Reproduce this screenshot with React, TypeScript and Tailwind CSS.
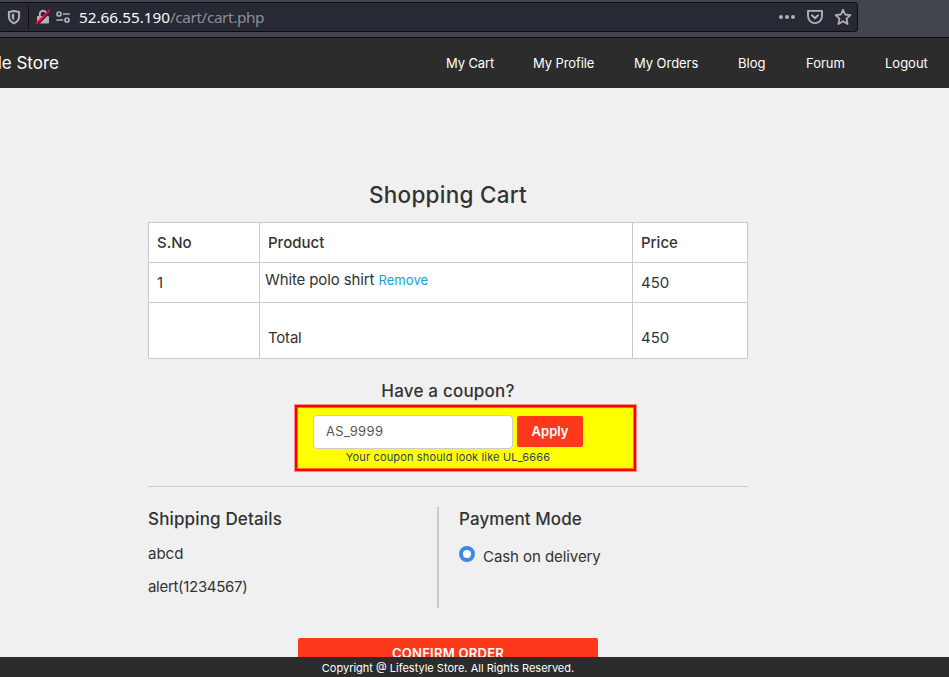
import React from "react";

const navItems = [
  { label: "My Cart", box: "w-[48px] mr-[39px] tracking-[-0.1px]" },
  { label: "My Profile", box: "w-[61px] mr-[40px] tracking-[-0.1px]" },
  { label: "My Orders", box: "w-[64px] mr-[40px] tracking-[-0.05px]" },
  { label: "Blog", box: "w-[28px] mr-[40px]" },
  { label: "Forum", box: "w-[39px] mr-[40px]" },
  { label: "Logout", box: "w-[43px]" },
];

function AddressBar() {
  return (
    <div className="h-[38px] border-b border-[#0c0c0e] bg-[#42454e] pt-[2px]">
      <div className="flex h-[30px] w-[858px] items-center rounded-r-[4px] border border-l-0 border-[#0d0e14] bg-[#272935] font-['Noto_Sans',sans-serif] text-[#b1b1b3]">
        <svg className="ml-[6px] h-4 w-4 shrink-0" viewBox="0 0 16 16" fill="none" stroke="currentColor">
          <path d="M8 1.900 13.100 3v4.500c0 3.400-2 5.500-5.100 6.900-3.100-1.400-5.100-3.500-5.100-6.900V3Z" strokeWidth="2" strokeLinejoin="round" />
          <path d="M8.200 4.600v6.800C6.400 10.400 5.700 9.300 5.700 7.500V5.200Z" fill="currentColor" stroke="none" />
        </svg>
        <div className="ml-[6px] h-[22px] w-px bg-[#0d0e14]" />
        <svg className="ml-[6px] h-4 w-4 shrink-0" viewBox="0 0 16 16" fill="none">
          <path d="M4.800 7V5a3.200 3.200 0 0 1 6.400 0v2" stroke="#b1b1b3" strokeWidth="2" />
          <rect x="2" y="7" width="12" height="7.500" rx="1" fill="#b1b1b3" />
          <path d="M2.500 15.500 15.500 2.500" stroke="#272935" strokeWidth="1.800" />
          <path d="M1.500 14.300 14.500 1.300" stroke="#ff0039" strokeWidth="1.800" strokeLinecap="round" />
        </svg>
        <svg className="ml-[4px] h-4 w-4 shrink-0" viewBox="0 0 16 16" fill="none" stroke="currentColor" strokeWidth="1.700">
          <circle cx="4" cy="5" r="2" />
          <path d="M8.500 5H14M2 11h5.500" strokeLinecap="round" />
          <circle cx="12" cy="11" r="2" />
        </svg>
        <div className="ml-[8px] flex-1 whitespace-pre text-[15.300px] leading-[28px] text-[#8e8f95]">
          <span className="text-[#f9f9fa]">52.66.55.190</span>
          <span className="tracking-[-0.380px]">/cart/cart.php</span>
        </div>
        <svg className="h-4 w-[18px]" viewBox="0 0 18 16" fill="currentColor">
          <circle cx="3" cy="8" r="2" /><circle cx="9" cy="8" r="2" /><circle cx="15" cy="8" r="2" />
        </svg>
        <svg className="ml-[11px] h-4 w-4" viewBox="0 0 16 16" fill="none" stroke="currentColor" strokeWidth="1.900" strokeLinecap="round" strokeLinejoin="round">
          <path d="M1 1.900h14v5.200a7 7 0 0 1-14 0Z" />
          <path d="m4.900 6.300 3.100 2.900 3.100-2.900" />
        </svg>
        <svg className="ml-[11px] mr-[5px] h-[18px] w-[18px]" viewBox="0 0 18 18" fill="none" stroke="currentColor" strokeWidth="1.800" strokeLinejoin="round">
          <path d="m9 1.800 2.100 4.700 5.300.6-3.900 3.500 1.100 5.400L9 13.300 4.400 16l1.100-5.400L1.600 7.100l5.300-.6Z" />
        </svg>
      </div>
    </div>
  );
}

function CartTable() {
  return (
    <div className="grid h-[137px] w-[600px] grid-cols-[111px_373px_114px] grid-rows-[40px_40px_55px] border border-[#c9c9c9] bg-white text-[15px] leading-[20px] [&>*]:border-[#c9c9c9]">
      <div className="border-b border-r pl-2 pt-[10px] font-medium">S.No</div>
      <div className="border-b border-r pl-2 pt-[10px] font-medium">Product</div>
      <div className="border-b pl-2 pt-[10px] font-medium">Price</div>
      <div className="border-b border-r pl-2 pt-[10px]">1</div>
      <div className="border-b border-r pl-[5px] pt-[7px] tracking-[-0.120px]">
        White polo shirt <a className="text-[13px] tracking-[0.080px] text-[#16a1d8]">Remove</a>
      </div>
      <div className="border-b pl-2 pt-[10px]">450</div>
      <div className="border-r" />
      <div className="border-r pl-2 pt-[25px] tracking-[-0.200px]">Total</div>
      <div className="pl-2 pt-[25px]">450</div>
    </div>
  );
}

export default function App() {
  return (
    <div className="flex h-[677px] w-[949px] flex-col overflow-hidden bg-[#f0f0f0] font-[Inter,sans-serif] text-[#333]">
      <AddressBar />
      <nav className="flex h-[50px] shrink-0 items-center justify-between bg-[#2c2c2c] pr-[21px] pt-px text-white">
        <div className="flex w-[59px] justify-end whitespace-nowrap pt-px text-[17px]">Lifestyle Store</div>
        <div className="flex whitespace-nowrap text-[13px]">
          {navItems.map((item) => (
            <a key={item.label} className={item.box}>{item.label}</a>
          ))}
        </div>
      </nav>
      <main className="ml-[148px] flex min-h-0 w-[600px] flex-1 flex-col overflow-hidden">
        <h1 className="mt-[92px] h-[42px] shrink-0 text-center text-[22.500px] font-medium leading-[30px] tracking-[0.250px]">Shopping Cart</h1>
        <CartTable />
        <h2 className="mt-[20px] h-[25px] shrink-0 text-center text-[17px] font-medium leading-[24px] tracking-[0.200px]">Have a coupon?</h2>
        <div className="ml-[146px] h-[68px] w-[343px] shrink-0 border border-[#f68c8c]">
          <div className="h-[66px] border-2 border-[#ff0000] bg-[#ffff00] pl-[16px] pt-[8px] shadow-[inset_0_0_0_1px_#ff7000]">
            <div className="flex items-start gap-[4px]">
              <div className="h-[34px] w-[200px] rounded-[4px] border border-[#ccc] bg-white pl-[12px] text-[13px] leading-[31px] tracking-[0.350px] text-[#555]">AS_9999</div>
              <button className="mt-px h-[31px] w-[66px] rounded-[2px] bg-[#fc3a1b] text-[13px] font-semibold text-white">Apply</button>
            </div>
            <p className="w-[270px] text-center text-[11px] leading-[16px] tracking-[0.150px] text-[#333c66]">Your coupon should look like UL_6666</p>
          </div>
        </div>
        <div className="mt-[14px] h-px shrink-0 bg-[#c9c9c9]" />
        <div className="mt-[20px] flex h-[101px] shrink-0">
          <section className="w-[291px] border-r-2 border-[#c9c9c9]">
            <h3 className="text-[17px] font-medium leading-[24px] tracking-[0.150px]">Shipping Details</h3>
            <p className="mt-[13px] text-[15px] leading-[20px]">abcd</p>
            <p className="mt-[13px] text-[15px] leading-[20px] tracking-[-0.300px]">alert(1234567)</p>
          </section>
          <section className="pl-[20px]">
            <h3 className="text-[17px] font-medium leading-[24px] tracking-[0.080px]">Payment Mode</h3>
            <div className="mt-[15px] flex items-start">
              <span className="h-4 w-4 rounded-full border-4 border-[#3c89e5] bg-white" />
              <span className="ml-[8px] mt-px text-[15px] leading-[20px] tracking-[-0.070px]">Cash on delivery</span>
            </div>
          </section>
        </div>
        <button className="ml-[150px] mt-[30px] h-[32px] w-[300px] shrink-0 rounded-[2px] bg-[#fc3a1b] text-[13px] font-semibold tracking-[0.260px] text-white">CONFIRM ORDER</button>
      </main>
      <footer className="h-[20px] shrink-0 bg-[#2c2c2c] text-[11px] leading-[22px] text-white">
        <p className="w-[896px] text-center">Copyright @ Lifestyle Store. All Rights Reserved.</p>
      </footer>
    </div>
  );
}
